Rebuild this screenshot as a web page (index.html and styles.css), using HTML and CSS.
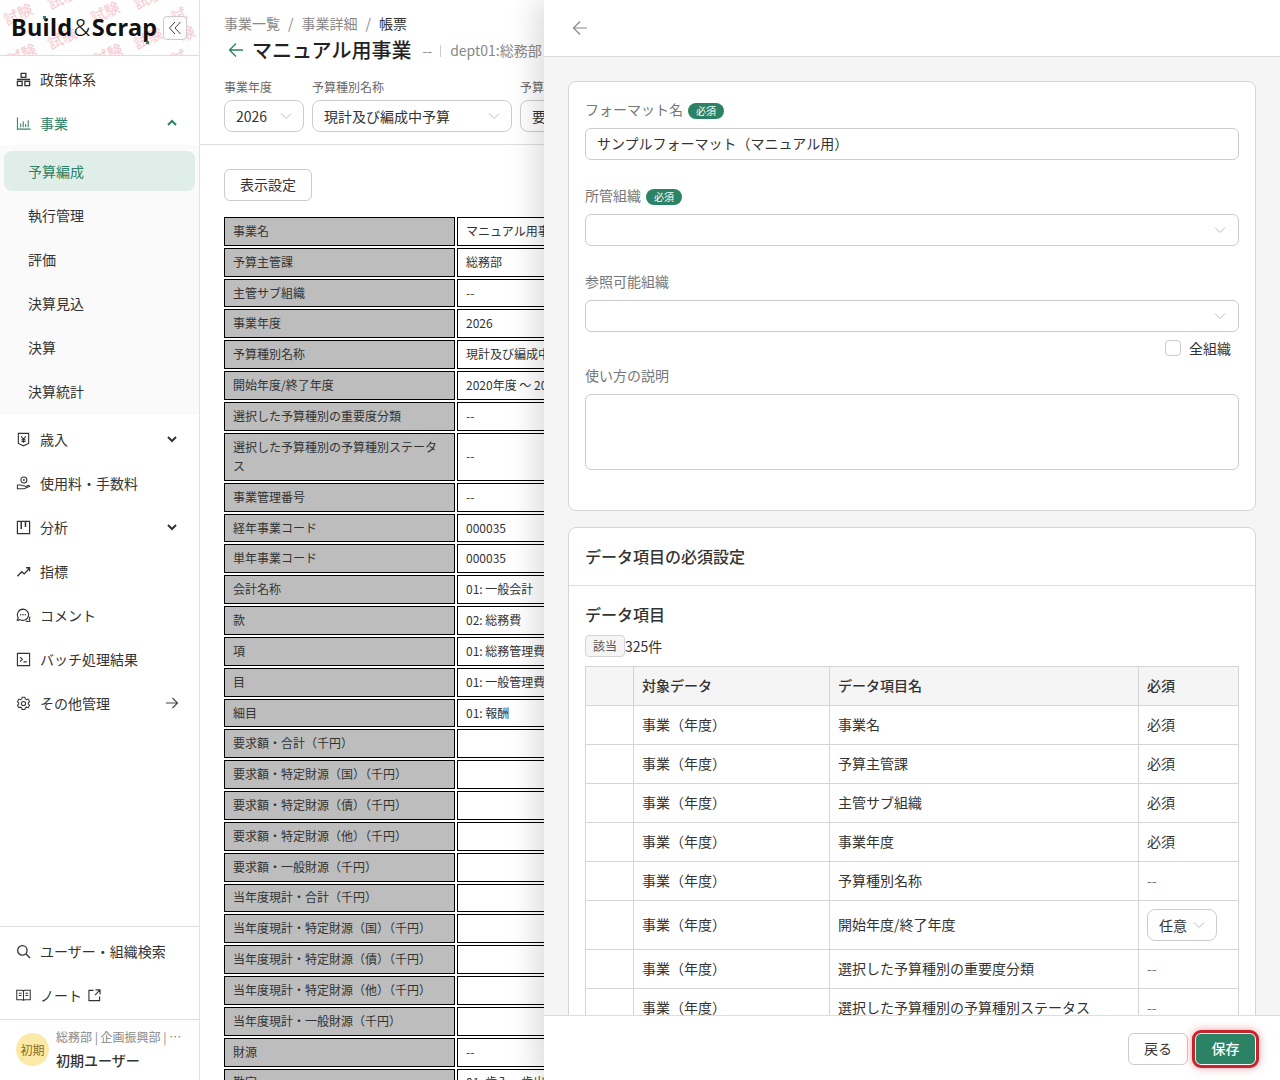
FILE: index.html
```html
<!DOCTYPE html>
<html lang="ja">
<head>
<meta charset="utf-8">
<title>帳票</title>
<link rel="stylesheet" href="styles.css">
</head>
<body>
<div class="app">
  <aside class="sidebar">
    <div class="brand">
      <div class="watermark" aria-hidden="true">
        <span class="w1">試験</span><span class="w2">試験</span><span class="w3">試験</span><span class="w4">試験</span><span class="w5">試験</span><span class="w6">試験</span><span class="w7">試験</span><span class="w8">試験</span><span class="w9">試験</span><span class="w10">試験</span>
      </div>
      <div class="logo">Build<span class="amp">&amp;</span>Scrap<i class="dot dot-i"></i><i class="dot dot-p"></i></div>
      <button class="collapse"><svg viewBox="0 0 16 16" class="i16"><path d="M8 2 2.5 8 8 14M13.5 2 8 8l5.5 6" fill="none" stroke="#444" stroke-width="1"/></svg></button>
    </div>
    <nav class="nav">
      <a class="item"><svg class="ico" viewBox="0 0 16 16"><path d="M5.5 1.5h5v4.3h-5zM1.5 10h5v4.5h-5zM9.5 10h5v4.5h-5zM1 8h14" fill="none" stroke="#333" stroke-width="1.4"/></svg><span>政策体系</span></a>
      <a class="item green"><svg class="ico" viewBox="0 0 16 16"><path d="M1.5 1.5v12.5h14M5 8v4M7.7 5.5V12M10.3 8.5V12M13 4.5V12" fill="none" stroke="#2b8265" stroke-width="1.1"/></svg><span>事業</span><svg class="chev" viewBox="0 0 12 12"><path d="M2 8l4-4 4 4" fill="none" stroke="#2b8265" stroke-width="2"/></svg></a>
      <div class="sub">
        <a class="subitem active">予算編成</a>
        <a class="subitem">執行管理</a>
        <a class="subitem">評価</a>
        <a class="subitem">決算見込</a>
        <a class="subitem">決算</a>
        <a class="subitem">決算統計</a>
      </div>
      <a class="item"><svg class="ico" viewBox="0 0 16 16"><path d="M2.5 1.5h11v10.7L8 14.8l-5.500-2.600zM5.600 4.500 8 7.800l2.400-3.300M8 7.800v3.600M5.800 8.300h4.400M5.800 10h4.400" fill="none" stroke="#333" stroke-width="1.2"/></svg><span>歳入</span><svg class="chev" viewBox="0 0 12 12"><path d="M2 4l4 4 4-4" fill="none" stroke="#333" stroke-width="2"/></svg></a>
      <a class="item"><svg class="ico" viewBox="0 0 16 16"><circle cx="8.400" cy="4.200" r="3.200" fill="none" stroke="#333" stroke-width="1.100"/><circle cx="8.400" cy="4.200" r="1" fill="#333"/><path d="M1.500 9.500h3.200c1 0 1.400.8 2.300.8h2.500M1.500 9v5M1.500 13.500h7.200l6-2.500c-.6-1-1.600-1-2.400-.7l-2.800 1.200" fill="none" stroke="#333" stroke-width="1.100"/></svg><span>使用料・手数料</span></a>
      <a class="item"><svg class="ico" viewBox="0 0 16 16"><path d="M1.500 1.500h13v13h-13z" fill="none" stroke="#333" stroke-width="1.300"/><path d="M4.800 2h1.600v7.500H4.800zM9.300 2h1.600v5.500H9.300z" fill="#333"/></svg><span>分析</span><svg class="chev" viewBox="0 0 12 12"><path d="M2 4l4 4 4-4" fill="none" stroke="#333" stroke-width="2"/></svg></a>
      <a class="item"><svg class="ico" viewBox="0 0 16 16"><path d="M1.500 13l4.700-4.700 2.500 2.300L14 5M10.800 4h3.700v3.600" fill="none" stroke="#333" stroke-width="1.400"/></svg><span>指標</span></a>
      <a class="item"><svg class="ico" viewBox="0 0 16 16"><path d="M7.500 1.200a6 6 0 0 0-5.200 9l-.9 3 3-.8a6 6 0 1 0 3.100-11.200z M10.500 14c1.400.5 3 .6 4.300.1l-.7-2.300c.5-.9.800-1.800.800-2.800" fill="none" stroke="#333" stroke-width="1.200"/><circle cx="5" cy="7.200" r=".8" fill="#333"/><circle cx="7.500" cy="7.200" r=".8" fill="#333"/><circle cx="10" cy="7.200" r=".8" fill="#333"/></svg><span>コメント</span></a>
      <a class="item"><svg class="ico" viewBox="0 0 16 16"><path d="M1.500 1.500h13v13h-13zM4.300 5.500l2.500 2.300-2.500 2.300M8 10.500h3.500" fill="none" stroke="#333" stroke-width="1.200"/></svg><span>バッチ処理結果</span></a>
      <a class="item"><svg class="ico" viewBox="0 0 16 16"><path d="M6.500 1.300h3l.4 1.900 1.300.7 1.800-.6 1.500 2.600-1.400 1.300v1.400l1.400 1.300-1.500 2.600-1.800-.6-1.300.7-.4 1.900h-3l-.4-1.900-1.300-.7-1.800.6-1.500-2.600 1.400-1.300V7.200L1.500 5.900 3 3.300l1.800.6 1.300-.7z" fill="none" stroke="#333" stroke-width="1.100"/><circle cx="8" cy="8" r="2.200" fill="none" stroke="#333" stroke-width="1.100"/></svg><span>その他管理</span><svg class="arrow" viewBox="0 0 14 14"><path d="M1 7h11.500M7.500 2l5 5-5 5" fill="none" stroke="#444" stroke-width="1.100"/></svg></a>
    </nav>
    <div class="nav-bottom">
      <a class="item"><svg class="ico" viewBox="0 0 16 16"><circle cx="6.800" cy="6.800" r="5" fill="none" stroke="#333" stroke-width="1.400"/><path d="M10.400 10.400 15 15" stroke="#333" stroke-width="1.400"/></svg><span>ユーザー・組織検索</span></a>
      <a class="item"><svg class="ico" viewBox="0 0 16 16"><path d="M.8 2.500h5.700c.8 0 1.500.4 1.500 1 0-.6.7-1 1.500-1h5.700v10H9.500c-.8 0-1.500.2-1.500 1 0-.8-.7-1-1.500-1H.8zM8 3.500v10M3 5.500h3M3 8h3M10 5.500h3M10 8h3" fill="none" stroke="#333" stroke-width="1.100"/></svg><span>ノート</span><svg class="ext" viewBox="0 0 14 14"><path d="M6 1.500H1v11h11.500V8M8 1h5v5M13 1 7.500 6.500" fill="none" stroke="#333" stroke-width="1.200"/></svg></a>
    </div>
    <div class="user">
      <div class="avatar">初期</div>
      <div class="user-text">
        <div class="dept">総務部 | 企画振興部 | …</div>
        <div class="uname">初期ユーザー</div>
      </div>
    </div>
  </aside>

  <main class="main">
    <header class="page-head">
      <div class="crumbs"><span>事業一覧</span><i>/</i><span>事業詳細</span><i>/</i><b>帳票</b></div>
      <div class="title-row">
        <svg class="back" viewBox="0 0 16 16"><path d="M15 8H1.500M8 1.500 1.500 8 8 14.500" fill="none" stroke="#2b8265" stroke-width="1.300"/></svg>
        <h1>マニュアル用事業</h1>
        <span class="meta">--</span><span class="bar"></span><span class="meta">dept01:総務部</span>
      </div>
      <div class="filters">
        <div class="filter"><label>事業年度</label><div class="select w-year"><span>2026</span><svg class="cv" viewBox="0 0 12 12"><path d="M1 3.500l5 5 5-5" fill="none" stroke="#bbb"/></svg></div></div>
        <div class="filter"><label>予算種別名称</label><div class="select w-type"><span>現計及び編成中予算</span><svg class="cv" viewBox="0 0 12 12"><path d="M1 3.500l5 5 5-5" fill="none" stroke="#bbb"/></svg></div></div>
        <div class="filter"><label>予算区分</label><div class="select w-type"><span>要求額</span><svg class="cv" viewBox="0 0 12 12"><path d="M1 3.500l5 5 5-5" fill="none" stroke="#bbb"/></svg></div></div>
      </div>
    </header>
    <section class="report">
      <button class="btn show-btn">表示設定</button>
      <table class="sheet">
        <tr><th>事業名</th><td>マニュアル用事業</td></tr>
        <tr><th>予算主管課</th><td>総務部</td></tr>
        <tr><th>主管サブ組織</th><td>--</td></tr>
        <tr><th>事業年度</th><td>2026</td></tr>
        <tr><th>予算種別名称</th><td>現計及び編成中予算</td></tr>
        <tr><th>開始年度/終了年度</th><td>2020年度 ～ 2026年度</td></tr>
        <tr><th>選択した予算種別の重要度分類</th><td>--</td></tr>
        <tr class="two-line"><th>選択した予算種別の予算種別ステータス</th><td>--</td></tr>
        <tr><th>事業管理番号</th><td>--</td></tr>
        <tr><th>経年事業コード</th><td>000035</td></tr>
        <tr><th>単年事業コード</th><td>000035</td></tr>
        <tr><th>会計名称</th><td>01: 一般会計</td></tr>
        <tr><th>款</th><td>02: 総務費</td></tr>
        <tr><th>項</th><td>01: 総務管理費</td></tr>
        <tr><th>目</th><td>01: 一般管理費</td></tr>
        <tr><th>細目</th><td>01: 報酬</td></tr>
        <tr><th>要求額・合計（千円）</th><td></td></tr>
        <tr><th>要求額・特定財源（国）（千円）</th><td></td></tr>
        <tr><th>要求額・特定財源（債）（千円）</th><td></td></tr>
        <tr><th>要求額・特定財源（他）（千円）</th><td></td></tr>
        <tr><th>要求額・一般財源（千円）</th><td></td></tr>
        <tr><th>当年度現計・合計（千円）</th><td></td></tr>
        <tr><th>当年度現計・特定財源（国）（千円）</th><td></td></tr>
        <tr><th>当年度現計・特定財源（債）（千円）</th><td></td></tr>
        <tr><th>当年度現計・特定財源（他）（千円）</th><td></td></tr>
        <tr><th>当年度現計・一般財源（千円）</th><td></td></tr>
        <tr><th>財源</th><td>--</td></tr>
        <tr><th>勘定</th><td>01: 歳入・歳出</td></tr>
      </table>
    </section>
  </main>

  <aside class="panel">
    <div class="panel-head"><svg class="panel-back" viewBox="0 0 16 16"><path d="M15 8H1.500M8 1.500 1.500 8 8 14.500" fill="none" stroke="#8a8a8a" stroke-width="1.200"/></svg></div>
    <div class="panel-body">
      <div class="card form-card">
        <div class="field">
          <div class="flabel">フォーマット名<em class="req">必須</em></div>
          <div class="input">サンプルフォーマット（マニュアル用）</div>
        </div>
        <div class="field">
          <div class="flabel">所管組織<em class="req">必須</em></div>
          <div class="input sel"><svg class="cv" viewBox="0 0 12 12"><path d="M1 3.500l5 5 5-5" fill="none" stroke="#bbb"/></svg></div>
        </div>
        <div class="field compact">
          <div class="flabel">参照可能組織</div>
          <div class="input sel"><svg class="cv" viewBox="0 0 12 12"><path d="M1 3.500l5 5 5-5" fill="none" stroke="#bbb"/></svg></div>
          <div class="check-row"><span class="check"></span><span>全組織</span></div>
        </div>
        <div class="field last">
          <div class="flabel">使い方の説明</div>
          <div class="textarea"></div>
        </div>
      </div>
      <div class="card data-card">
        <h2 class="card-title">データ項目の必須設定</h2>
        <div class="card-main">
          <h3>データ項目</h3>
          <div class="count"><span class="tag">該当</span><span>325件</span></div>
          <table class="items">
            <colgroup><col class="c1"><col class="c2"><col class="c3"><col></colgroup>
            <thead><tr><th></th><th>対象データ</th><th>データ項目名</th><th>必須</th></tr></thead>
            <tbody>
              <tr><td></td><td>事業（年度）</td><td>事業名</td><td>必須</td></tr>
              <tr><td></td><td>事業（年度）</td><td>予算主管課</td><td>必須</td></tr>
              <tr><td></td><td>事業（年度）</td><td>主管サブ組織</td><td>必須</td></tr>
              <tr><td></td><td>事業（年度）</td><td>事業年度</td><td>必須</td></tr>
              <tr><td></td><td>事業（年度）</td><td>予算種別名称</td><td class="dash">--</td></tr>
              <tr class="tall"><td></td><td>事業（年度）</td><td>開始年度/終了年度</td><td class="opt"><div class="select w-opt"><span>任意</span><svg class="cv" viewBox="0 0 12 12"><path d="M1 3.500l5 5 5-5" fill="none" stroke="#bbb"/></svg></div></td></tr>
              <tr><td></td><td>事業（年度）</td><td>選択した予算種別の重要度分類</td><td class="dash">--</td></tr>
              <tr><td></td><td>事業（年度）</td><td>選択した予算種別の予算種別ステータス</td><td class="dash">--</td></tr>
            </tbody>
          </table>
        </div>
      </div>
    </div>
    <div class="panel-foot">
      <button class="btn back-btn">戻る</button>
      <button class="btn save-btn">保存</button>
    </div>
  </aside>
</div>
</body>
</html>
```
FILE: styles.css
```css
* { box-sizing: border-box; }
html, body { margin: 0; height: 100%; overflow: hidden; }
body { font-family: "Noto Sans CJK JP", "Noto Sans", sans-serif; font-size: 14px; color: #333; background: #fff; }
.app { position: relative; display: flex; width: 1280px; height: 1080px; overflow: hidden; }

/* sidebar */
.sidebar { flex: 0 0 200px; width: 200px; height: 1080px; display: flex; flex-direction: column; border-right: 1px solid #e2e2e2; background: #fff; }
.brand { position: relative; flex: 0 0 56px; display: flex; align-items: center; justify-content: space-between; padding: 0 12px 2px 11px; border-bottom: 1px solid #ddd; overflow: hidden; }
.watermark { position: absolute; inset: 0; color: rgba(235, 120, 145, .38); font-size: 15px; font-weight: 500; line-height: 20px; }
.watermark span { position: absolute; transform: rotate(-25deg); }
.w1 { left: 3px; top: 4px; } .w2 { left: 90px; top: 2px; } .w3 { left: 175px; top: 2px; }
.w4 { left: 47px; top: 28px; } .w5 { left: 133px; top: 28px; }
.w6 { left: 7px; top: 44px; } .w7 { left: 93px; top: 44px; } .w8 { left: 175px; top: 44px; }
.w9 { left: 47px; top: -12px; } .w10 { left: 133px; top: -12px; }
.logo { position: relative; font-family: "Noto Sans", sans-serif; font-weight: 700; font-size: 23.5px; line-height: 30px; color: #111; letter-spacing: .35px; white-space: nowrap; }
.amp { font-weight: 300; margin: 0 1px; }
.dot { position: absolute; width: 3px; height: 3px; background: #2b8265; }
.dot-i { left: 32px; top: 4px; }
.dot-p { left: 135px; top: 29px; }
.collapse { position: relative; width: 24px; height: 24px; margin-top: 2px; padding: 3px; background: rgba(255,255,255,.8); border: 1px solid #ccc; border-radius: 4px; }
.i16 { display: block; width: 16px; height: 16px; }
.nav { flex: 1; padding-top: 1px; }
.item { display: flex; align-items: center; height: 44px; padding: 0 21px 0 16px; color: #333; font-size: 14px; }
.item.green { color: #2b8265; }
.ico { flex: none; width: 15px; height: 15px; margin-right: 9px; }
.chev { width: 12px; height: 12px; margin-left: auto; }
.arrow { width: 14px; height: 14px; margin-left: auto; margin-right: -1px; }
.ext { width: 13px; height: 13px; margin-left: 6px; }
.sub { padding: 6px 4px 4px; background: #fafafa; display: flex; flex-direction: column; gap: 4px; margin-bottom: 2px; }
.subitem { display: flex; align-items: center; height: 40px; padding: 0 24px; border-radius: 8px; font-size: 14px; color: #333; }
.subitem.active { background: #dfeee9; color: #2b8265; }
.nav-bottom { border-top: 1px solid #ddd; padding: 2px 0 2px; height: 93px; }
.user { flex: 0 0 61px; display: flex; align-items: center; gap: 7px; padding: 0 16px 1px; border-top: 1px solid #ddd; }
.avatar { flex: none; width: 33px; height: 33px; border-radius: 50%; background: #fbe9a8; color: #8a6d1f; font-size: 12px; display: flex; align-items: center; justify-content: center; }
.user-text { min-width: 0; padding-bottom: 2px; }
.dept { font-size: 12px; line-height: 18px; color: #888; white-space: nowrap; }
.uname { font-size: 14px; line-height: 20px; margin-top: 4px; color: #333; font-weight: 500; white-space: nowrap; }

/* main */
.main { flex: 1; min-width: 0; overflow: hidden; }
.page-head { height: 145px; padding: 13px 24px 0; border-bottom: 1px solid #ddd; }
.crumbs { display: flex; gap: 8px; font-size: 14px; line-height: 20px; color: #888; }
.crumbs i { font-style: normal; color: #888; }
.crumbs b { font-weight: 400; color: #333; }
.title-row { display: flex; align-items: center; height: 32px; margin-top: 1px; white-space: nowrap; }
.back { width: 16px; height: 16px; margin: 0 8px 0 4px; }
h1 { margin: 0 11px 0 0; font-size: 20px; font-weight: 500; line-height: 32px; color: #222; }
.meta { font-size: 14px; color: #888; }
.bar { width: 1px; height: 12px; background: #ccc; margin: 1px 9px 0 8px; }
.filters { display: flex; gap: 8px; margin-top: 12px; white-space: nowrap; }
.filter label { display: block; font-size: 12px; line-height: 18px; color: #666; margin-bottom: 4px; }
.select { display: flex; align-items: center; justify-content: space-between; height: 32px; padding: 0 11px; border: 1px solid #ccc; border-radius: 8px; background: #fff; font-size: 14px; color: #333; }
.w-year { width: 80px; }
.w-type { width: 200px; }
.w-opt { width: 70px; }
.cv { flex: none; width: 12px; height: 12px; }
.report { padding: 24px 24px 0; }
.btn { height: 32px; padding: 0 15px 2px; font: inherit; font-size: 14px; background: #fff; color: #333; border: 1px solid #ccc; border-radius: 6px; }
.show-btn { display: block; width: 88px; padding: 0 0 2px; }
.sheet { margin: 14px 0 0 -2px; border-collapse: separate; border-spacing: 2px; width: 1000px; table-layout: fixed; font-size: 12px; }
.sheet th { width: 231px; height: 28.83px; padding: 2px 8px 4px; border: 1px solid #000; background: #bdbdbd; color: #333; font-weight: 400; line-height: 19px; text-align: left; }
.sheet td { height: 28.83px; padding: 2px 8px 4px; border: 1px solid #000; background: #fff; color: #333; line-height: 19px; }
.sheet .two-line th, .sheet .two-line td { height: 48px; }

/* panel */
.panel { position: absolute; top: 0; right: 0; width: 736px; height: 1080px; display: flex; flex-direction: column; background: #f5f5f5; box-shadow: -8px 0 28px rgba(0,0,0,.14); }
.panel-head { flex: 0 0 57px; display: flex; align-items: center; padding: 0 28px 1px; background: #fff; border-bottom: 1px solid #ddd; }
.panel-back { width: 16px; height: 16px; }
.panel-body { flex: 1; min-height: 0; overflow: hidden; padding: 24px 24px 0; }
.card { background: #fff; border: 1px solid #d5d5d5; border-radius: 8px; }
.form-card { height: 430px; padding: 16px; margin-bottom: 16px; }
.field { height: 86px; }
.field.compact { height: 94px; }
.flabel { display: flex; align-items: center; height: 24px; margin-bottom: 6px; padding-bottom: 2px; font-size: 14px; color: #777; }
.req { display: inline-block; margin: 4px 0 0 5px; padding: 0 8px; height: 16px; line-height: 16px; border-radius: 8px; background: #2b8265; color: #fff; font-size: 10px; font-style: normal; }
.input { display: flex; align-items: center; justify-content: flex-start; height: 32px; padding: 0 11px 2px; border: 1px solid #ccc; border-radius: 6px; font-size: 14px; color: #333; }
.input.sel { justify-content: flex-end; padding: 0 12px; }
.check-row { display: flex; justify-content: flex-end; align-items: center; gap: 8px; height: 22px; margin-top: 5px; padding-right: 8px; font-size: 14px; }
.check { width: 16px; height: 16px; border: 1px solid #ccc; border-radius: 4px; }
.textarea { height: 76px; border: 1px solid #ccc; border-radius: 6px; }
.card-title { margin: 0; height: 58px; padding: 0 16px 2px; display: flex; align-items: center; font-size: 16px; font-weight: 500; color: #333; border-bottom: 1px solid #ddd; }
.card-main { padding: 15px 16px 0; }
h3 { margin: 0; font-size: 16px; line-height: 26px; font-weight: 500; color: #333; }
.count { display: flex; align-items: center; height: 22px; margin-top: 8px; font-size: 14px; }
.tag { height: 22px; width: 40px; line-height: 20px; text-align: center; font-size: 12px; color: #555; background: #f5f5f5; border: 1px solid #d5d5d5; border-radius: 4px; }
.items { width: 654px; margin-top: 9px; border-collapse: collapse; table-layout: fixed; font-size: 14px; }
.c1 { width: 48px; } .c2 { width: 196px; } .c3 { width: 309px; }
.items th, .items td { height: 39px; padding: 0 8px 2px; border: 1px solid #d5d5d5; text-align: left; font-weight: 400; color: #333; }
.items th { background: #f5f5f5; font-weight: 500; }
.items .tall td { height: 49px; }
.items .tall .opt { padding-bottom: 0; }
.items td.dash { color: #777; }
.panel-foot { flex: 0 0 65px; display: flex; justify-content: flex-end; gap: 7px; padding: 17px 24px 0; background: #fff; border-top: 1px solid #ddd; }
.back-btn { width: 60px; padding: 0 0 2px; }
.save-btn { width: 61px; padding: 0 0 2px; background: #2b8265; color: #fff; border: 1px solid #fff; font-weight: 500; outline: 3px solid #c8242c; outline-offset: 0; box-shadow: 0 0 8px 3px rgba(220,40,50,.45); }
```
